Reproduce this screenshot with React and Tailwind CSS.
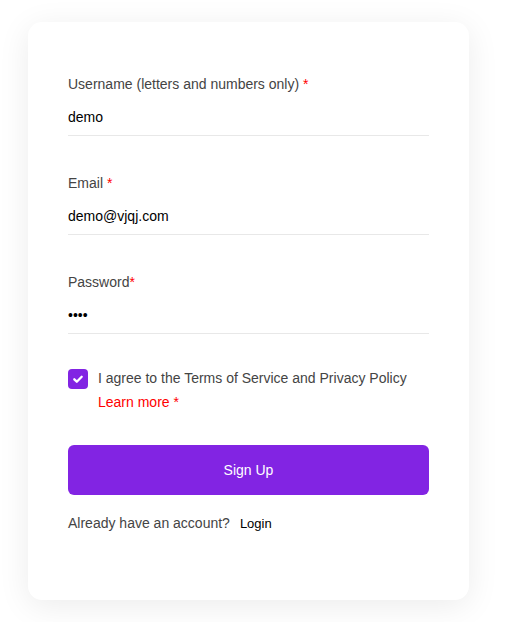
import React, { useState } from 'react';

const fields = [
  { label: 'Username (letters and numbers only)', gap: true, type: 'text', value: 'demo' },
  { label: 'Email', gap: true, type: 'email', value: 'demo@vjqj.com' },
  { label: 'Password', gap: false, type: 'password', value: 'demo' }
];

function Field({ field }) {
  const [value, setValue] = useState(field.value);
  return (
    <div className="mb-[37px]">
      <label className="block text-[14px] leading-5 text-[#444]">
        {field.label}
        {field.gap && ' '}
        <span className="text-[#ff0000]">*</span>
      </label>
      <input
        type={field.type}
        value={value}
        onChange={(e) => setValue(e.target.value)}
        className="mt-[5px] block h-[37px] w-full border-b border-[#e8e8e8] text-[14px] text-black outline-none"
      />
    </div>
  );
}

export default function App() {
  const [agreed, setAgreed] = useState(true);

  return (
    <div className="min-h-[622px] bg-white pt-[22px] font-['Liberation_Sans',Arial,sans-serif]">
      <div className="ml-[28px] h-[578px] w-[441px] rounded-[14px] bg-white px-[40px] pt-[52px] shadow-[0_6px_32px_rgba(0,0,0,0.08)]">
        {fields.map((field) => (
          <Field key={field.label} field={field} />
        ))}

        <div className="flex items-start gap-[10px]">
          <button
            type="button"
            onClick={() => setAgreed(!agreed)}
            className={`mt-[-2px] flex h-5 w-5 shrink-0 items-center justify-center rounded-[4px] ${agreed ? 'bg-[#8224e3]' : 'border border-gray-300 bg-white'}`}
          >
            {agreed && (
              <svg viewBox="0 0 12 12" className="h-[12px] w-[12px]" fill="none" stroke="white" strokeWidth="2.3" strokeLinecap="round" strokeLinejoin="round">
                <path d="M2.3 6.3l2.5 2.4 4.9-5" />
              </svg>
            )}
          </button>
          <div className="text-[14px] leading-6">
            <p className="mt-[-5px] text-[#444]">I agree to the Terms of Service and Privacy Policy</p>
            <p className="text-[#ff0000]">Learn more *</p>
          </div>
        </div>

        <button
          type="button"
          className="mt-[31px] h-[50px] w-full rounded-[6px] bg-[#8224e3] text-[14px] text-white"
        >
          Sign Up
        </button>

        <p className="mt-[18px] text-[14px] leading-5 text-[#444]">
          Already have an account?
          <span className="ml-[10px] text-[13px] font-medium text-black">Login</span>
        </p>
      </div>
    </div>
  );
}
